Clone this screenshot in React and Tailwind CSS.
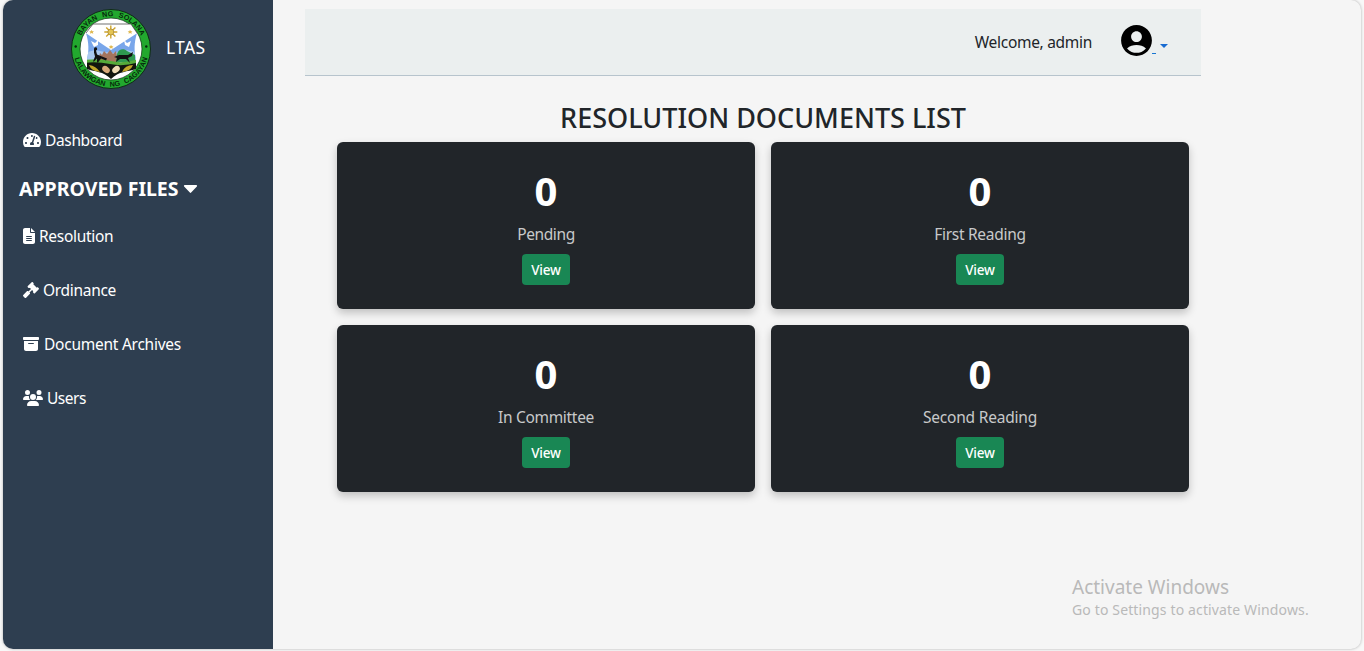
import { FaTachometerAlt, FaGavel, FaCaretDown } from "react-icons/fa";
import { FaBoxArchive, FaFileLines, FaUsers } from "react-icons/fa6";
import { MdAccountCircle } from "react-icons/md";

function Seal() {
  return (
    <svg viewBox="0 0 80 80" className="h-20 w-20 shrink-0">
      <defs>
        <path id="seal-top" d="M 7.3 40 A 32.7 32.7 0 0 1 72.7 40" />
        <path id="seal-bottom" d="M 2.4 40 A 37.6 37.6 0 0 0 77.6 40" />
        <clipPath id="seal-shield">
          <path d="M22 15 H60 L66 24 C63 34 63 42 65 50 V60 C56 63 48 62 40 70 C32 62 24 63 16 60 V50 C18 42 18 34 15 24 Z" />
        </clipPath>
      </defs>
      <circle cx="40" cy="40" r="39.5" fill="#22a82e" stroke="#102b18" strokeWidth="1" />
      <circle cx="40" cy="40" r="31" fill="#fff" stroke="#143d1b" strokeWidth="0.8" />
      <g fontFamily="Liberation Sans, sans-serif" fontWeight="700" fontSize="7.2" wordSpacing="3" fill="#06290b">
        <text textAnchor="middle"><textPath href="#seal-top" startOffset="50%">BAYAN NG SOLANA</textPath></text>
        <text textAnchor="middle"><textPath href="#seal-bottom" startOffset="50%">LALAWIGAN NG CAGAYAN</textPath></text>
      </g>
      <circle cx="4.7" cy="37.5" r="1.2" fill="#06290b" />
      <circle cx="75.3" cy="37.5" r="1.2" fill="#06290b" />
      <g clipPath="url(#seal-shield)">
        <rect x="10" y="14" width="60" height="58" fill="#fff" />
        <path d="M13 23 L40 41 L68 23 V54 H13 Z" fill="#79a6ea" />
        <path d="M13 44 L24 41 L34 43 L42 44 L55 41 L68 44 V54 H13 Z" fill="#a9c8ee" />
        <path d="M20 32l4 2 3-3 0 5-4 2zM60 32l-4 2-3-3 1 5 4 2z" fill="#fff" />
        <path d="M27 53 L29 44 L31 46 L33 42 L36 45 L39 41 L42 45 L45 42 L47 53 Z" fill="#a5745d" />
        <path d="M46 45c1-5 7-6 10-3l8 4v7H45z" fill="#2e9950" />
        <path d="M14 51 Q28 49 40 52 T68 50 V58 H13Z" fill="#55aa39" />
        <path d="M13 54 Q25 52 39 55 T68 53 V72 H13Z" fill="#12160f" />
        <path d="M18 56q7 1 11 7-9-1-11-7zM62 56q-8 0-11 7 9-1 11-7z" fill="#c0a628" />
        <ellipse cx="35" cy="60.5" rx="4.2" ry="3" transform="rotate(40 35 60.5)" fill="#d6a879" />
        <ellipse cx="45" cy="60.5" rx="4.2" ry="3" transform="rotate(-40 45 60.5)" fill="#eddbb5" />
        <path d="M23 40a1.6 1.6 0 1 1 2 1.5l1 4 5 2 5 2-1 2-5-2-3 4h-1l0-4-3 3h-1l2-5-1-4z" fill="#111" />
        <path d="M43 48l5-2h9l5-3-1 4-4 2 2 5-4-4h-6l-4 3 1-4z" fill="#111" />
      </g>
      <path d="M22 15 H60 L66 24 M22 15 L15 24" fill="none" stroke="#333" strokeWidth="0.7" />
      <g stroke="#cfa62f" strokeWidth="1.4">
        <path d="M39.8 16.5V29.5M33.3 23H46.3M35.2 18.4L44.4 27.6M44.4 18.4L35.2 27.6" />
        <circle cx="39.8" cy="23" r="3" fill="#e5c553" stroke="#94752c" strokeWidth="0.6" />
      </g>
      <path d="M20.5 21l1 1.2 1.5.1-1.1 1 .4 1.5-1.8-.8-1.5.8.3-1.5-1.1-1 1.5-.1zM59 21l1 1.2 1.5.1-1.1 1 .4 1.5-1.8-.8-1.5.8.3-1.5-1.1-1 1.5-.1zM40 36l1 1.2 1.5.1-1.1 1 .4 1.5-1.8-.8-1.5.8.3-1.5-1.1-1 1.5-.1z" fill="#dfb952" />
    </svg>
  );
}

function NavItem({ icon: Icon, iconClass, label, className }) {
  return (
    <a href="#" className="flex h-[54px] items-center pl-5 text-[15.5px] whitespace-nowrap text-white">
      <Icon className={iconClass} />
      <span className={className}>{label}</span>
    </a>
  );
}

function StatCard({ label, className }) {
  return (
    <section className="flex h-[167px] flex-col items-center rounded-md bg-[#212529] pt-[25px] text-white shadow-[0_4px_8px_rgba(0,0,0,0.22)]">
      <strong className="h-12 text-[40px] leading-[48px] font-bold">0</strong>
      <p className={`mt-[7px] h-6 text-[15.5px] leading-6 text-[#c8c9ca] ${className}`}>{label}</p>
      <button className="mt-2 h-[31px] w-12 rounded bg-[#198754] pt-px text-[13.5px] leading-[30px] font-medium tracking-[-0.2px]">View</button>
    </section>
  );
}

export default function App() {
  return (
    <div className="h-[651px] w-[1364px] overflow-hidden bg-[#f8f8f8] pr-[2px] pb-[2px] pl-[3px] font-['Noto_Sans','Open_Sans',sans-serif] text-[#212529]">
      <div className="flex h-[649px] w-[1358px] overflow-hidden rounded-[10px] bg-[#f5f5f5] shadow-[0_0_3px_rgba(0,0,0,0.3)]">
        <aside className="w-[270px] shrink-0 bg-[#2e3e50]">
          <div className="flex h-[97px] items-center pl-[68px] text-white">
            <Seal />
            <span className="mb-0.5 ml-[15px] text-[17.5px] tracking-[0.3px]">LTAS</span>
          </div>
          <nav className="pt-[17px]">
            <NavItem icon={FaTachometerAlt} iconClass="mb-0.5 h-4 w-[18px]" label="Dashboard" className="ml-1 tracking-[-0.35px]" />
            <h2 className="flex h-[42px] items-center pl-4 text-[19.5px] font-bold whitespace-nowrap text-white">
              <span>APPROVED FILES</span>
              <FaCaretDown className="mb-0.5 ml-[5px] h-[22px] w-[13px] scale-x-110 scale-y-115" />
            </h2>
            <NavItem icon={FaFileLines} iconClass="mb-0.5 h-4 w-3" label="Resolution" className="ml-1 tracking-[-0.3px]" />
            <NavItem icon={FaGavel} iconClass="mb-0.5 h-4 w-4" label="Ordinance" className="ml-1 tracking-[-0.3px]" />
            <NavItem icon={FaBoxArchive} iconClass="mb-0.5 h-4 w-4" label="Document Archives" className="ml-[5px] tracking-[-0.25px]" />
            <NavItem icon={FaUsers} iconClass="mb-0.5 h-4 w-5" label="Users" className="ml-1 tracking-[-0.5px]" />
          </nav>
        </aside>
        <main className="flex min-w-0 flex-1 flex-col pt-[9px] pl-8">
          <header className="flex h-[67px] w-[896px] shrink-0 items-center justify-end border-b border-[#b7c4cd] bg-[#ebefef] pr-[33px]">
            <span className="mt-[2px] text-[15.5px] tracking-[-0.3px]">Welcome, admin</span>
            <button className="ml-[26px] flex items-center" aria-label="Account menu">
              <MdAccountCircle className="mb-[3px] h-[37px] w-[37px] text-black" />
              <span className="mt-[23px] -ml-[3px] h-px w-1 shrink-0 bg-[#1876d2]" />
              <span className="mt-[7px] ml-1 border-x-4 border-t-4 border-x-transparent border-t-[#176bd1]" />
            </button>
          </header>
          <div className="ml-8 w-[852px]">
            <h1 className="mt-[25px] mb-2 text-center text-[27px] leading-[33px] font-medium">RESOLUTION DOCUMENTS LIST</h1>
            <div className="grid grid-cols-2 gap-4">
              <StatCard label="Pending" className="tracking-[-0.4px]" />
              <StatCard label="First Reading" className="tracking-[-0.3px]" />
              <StatCard label="In Committee" className="tracking-[-0.3px]" />
              <StatCard label="Second Reading" className="tracking-[-0.2px]" />
            </div>
          </div>
          <aside className="mt-auto mb-[29px] ml-[767px] text-[#b9b9b9]">
            <p className="text-[19px] leading-[25px]">Activate Windows</p>
            <p className="text-[14px] leading-5 tracking-[0.14px]">Go to Settings to activate Windows.</p>
          </aside>
        </main>
      </div>
    </div>
  );
}
